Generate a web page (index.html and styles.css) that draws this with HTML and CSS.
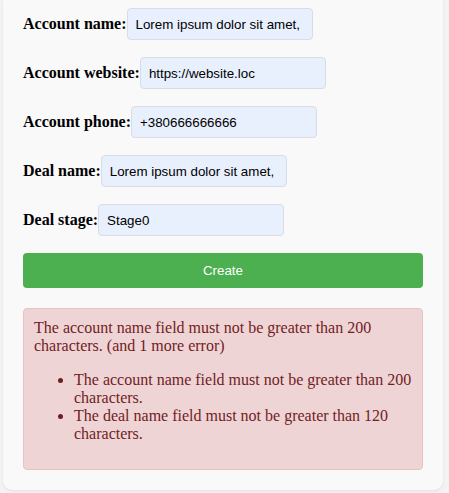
FILE: index.html
```html
<!DOCTYPE html>
<html>
<head>
<meta charset="utf-8">
<link rel="stylesheet" href="styles.css">
</head>
<body>
<div class="page">
  <form class="card">
    <div class="row">
      <label class="label">Account name:</label>
      <input class="field" type="text" value="Lorem ipsum dolor sit amet, consectetur adipiscing elit">
    </div>
    <div class="row">
      <label class="label">Account website:</label>
      <input class="field" type="text" value="https://website.loc">
    </div>
    <div class="row">
      <label class="label">Account phone:</label>
      <input class="field" type="text" value="+380666666666">
    </div>
    <div class="row">
      <label class="label">Deal name:</label>
      <input class="field" type="text" value="Lorem ipsum dolor sit amet, consectetur adipiscing elit">
    </div>
    <div class="row">
      <label class="label">Deal stage:</label>
      <input class="field" type="text" value="Stage0">
    </div>
    <button class="btn" type="button">Create</button>
    <div class="alert">
      <p class="alert-title">The account name field must not be greater than 200 characters. (and 1 more error)</p>
      <ul class="alert-list">
        <li>The account name field must not be greater than 200 characters.</li>
        <li>The deal name field must not be greater than 120 characters.</li>
      </ul>
    </div>
  </form>
</div>
</body>
</html>
```

FILE: styles.css
```css
html, body {
  margin: 0;
  padding: 0;
  background: #f3f3f3;
}
.page {
  padding: 0 6px 3px 3px;
}
.card {
  width: 440px;
  box-sizing: border-box;
  background: #f9f9f9;
  border-radius: 0 0 9px 9px;
  box-shadow: 0 1px 3px rgba(0,0,0,0.08);
  padding: 8px 20px 20px;
  display: flex;
  flex-direction: column;
  font-family: "Liberation Serif", "Times New Roman", serif;
}
.row {
  display: flex;
  align-items: center;
  margin-bottom: 17px;
}
.label {
  font-weight: bold;
  font-size: 16px;
  color: #000;
}
.field {
  width: 186px;
  height: 32px;
  box-sizing: border-box;
  padding: 0 8px;
  border: 1px solid #d9dde3;
  border-radius: 4px;
  background: #e8f0fe;
  font-family: "Liberation Sans", Arial, sans-serif;
  font-size: 13.333px;
  color: #000;
  margin: 0;
  outline: none;
}
.btn {
  height: 35px;
  border: none;
  border-radius: 4px;
  background: #4caf50;
  color: #fff;
  font-family: "Liberation Sans", Arial, sans-serif;
  font-size: 13.333px;
  margin: 0 0 20px;
  padding: 0;
}
.alert {
  background: #eed4d5;
  border: 1px solid #e6c2c5;
  border-radius: 4px;
  padding: 10px;
  color: #721c24;
  font-size: 16px;
}
.alert-title {
  margin: 0;
}
.alert-list {
  margin: 16px 0;
  padding-left: 40px;
}
```
